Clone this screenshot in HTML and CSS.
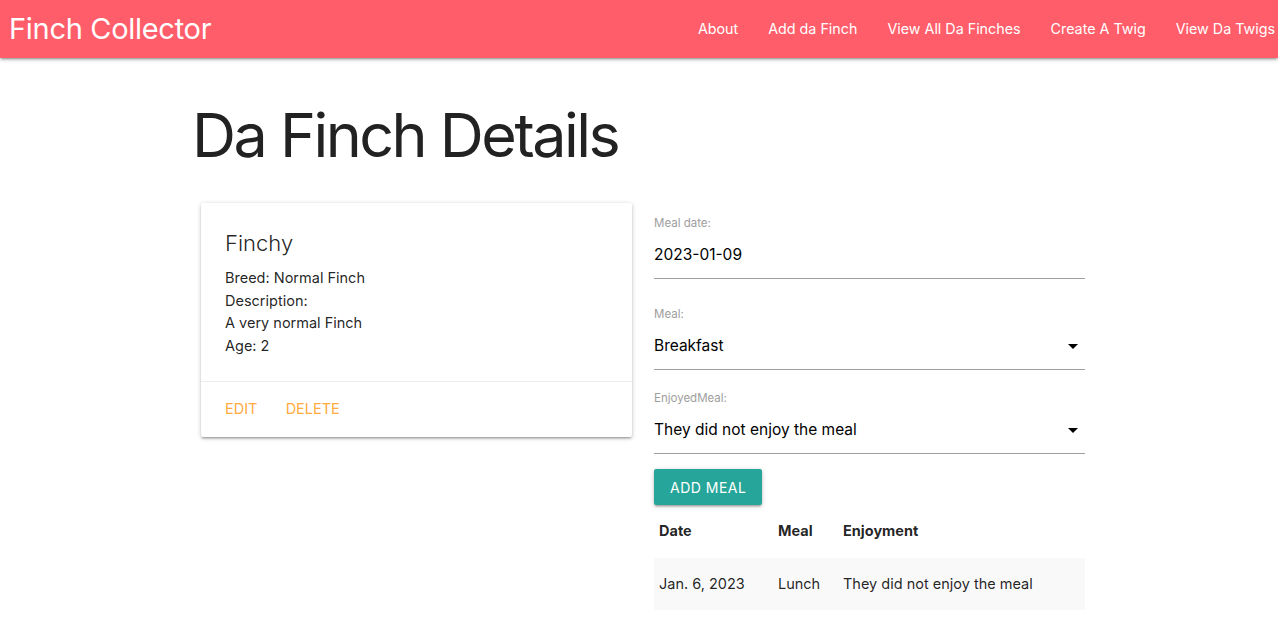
FILE: index.html
```html
<!DOCTYPE html>
<html lang="en">
<head>
<meta charset="utf-8">
<title>Finch Collector</title>
<link rel="stylesheet" href="styles.css">
</head>
<body>
<header class="navbar">
  <a class="brand" href="#">Finch Collector</a>
  <ul class="nav-links">
    <li><a href="#">About</a></li>
    <li><a href="#">Add da Finch</a></li>
    <li><a href="#">View All Da Finches</a></li>
    <li><a href="#">Create A Twig</a></li>
    <li><a href="#">View Da Twigs</a></li>
  </ul>
</header>
<main class="container">
  <h1 class="page-title">Da Finch Details</h1>
  <div class="row">
    <div class="col">
      <div class="card">
        <div class="card-content">
          <span class="card-title">Finchy</span>
          <p>Breed: Normal Finch</p>
          <p>Description:</p>
          <p>A very normal Finch</p>
          <p>Age: 2</p>
        </div>
        <div class="card-action">
          <a href="#">Edit</a>
          <a href="#">Delete</a>
        </div>
      </div>
    </div>
    <div class="col col-form">
      <form class="meal-form">
        <div class="field">
          <label class="field-label">Meal date:</label>
          <div class="field-input">2023-01-09</div>
        </div>
        <div class="field field-select">
          <label class="field-label">Meal:</label>
          <div class="field-input">
            <span>Breakfast</span>
            <svg class="caret" width="24" height="24" viewBox="0 0 24 24"><path d="M7 10l5 5 5-5z" fill="#000"/></svg>
          </div>
        </div>
        <div class="field field-select field-last">
          <label class="field-label">EnjoyedMeal:</label>
          <div class="field-input">
            <span>They did not enjoy the meal</span>
            <svg class="caret" width="24" height="24" viewBox="0 0 24 24"><path d="M7 10l5 5 5-5z" fill="#000"/></svg>
          </div>
        </div>
        <button type="button" class="btn">Add Meal</button>
      </form>
      <table class="meals">
        <thead>
          <tr><th class="c-date">Date</th><th class="c-meal">Meal</th><th>Enjoyment</th></tr>
        </thead>
        <tbody>
          <tr><td>Jan. 6, 2023</td><td>Lunch</td><td>They did not enjoy the meal</td></tr>
        </tbody>
      </table>
    </div>
  </div>
</main>
</body>
</html>
```

FILE: styles.css
```css
* { box-sizing: border-box; }

html, body {
  margin: 0;
  padding: 0;
}

body {
  font-family: Inter, "Noto Sans", Roboto, sans-serif;
  font-size: 15px;
  line-height: 1.5;
  color: rgba(0, 0, 0, 0.87);
  background: #fff;
  overflow-x: hidden;
}

a { text-decoration: none; }

.navbar {
  height: 58px;
  background: #ff5d6a;
  display: flex;
  align-items: center;
  justify-content: space-between;
  box-shadow: 0 2px 2px 0 rgba(0,0,0,0.14), 0 3px 1px -2px rgba(0,0,0,0.12), 0 1px 5px 0 rgba(0,0,0,0.2);
  overflow: hidden;
}

.brand {
  color: #fff;
  font-size: 29px;
  padding-left: 9px;
  letter-spacing: -0.3px;
  line-height: 56px;
}

.nav-links {
  list-style: none;
  margin: 0 -12px 0 0;
  padding: 0;
  display: flex;
}

.nav-links a {
  display: block;
  color: #fff;
  font-size: 14.3px;
  padding: 0 15px;
  line-height: 56px;
}

.container {
  width: 894px;
  margin: 0 auto;
}

.page-title {
  font-size: 61px;
  font-weight: 400;
  line-height: 1.1;
  margin: 44px 0 26px;
  letter-spacing: -2.5px;
  color: #222;
}

.row {
  display: flex;
  gap: 22px;
  padding-left: 9px;
}

.col {
  width: 431px;
}

.card {
  margin-top: 8px;
  background: #fff;
  border-radius: 2px;
  box-shadow: 0 2px 2px 0 rgba(0,0,0,0.14), 0 3px 1px -2px rgba(0,0,0,0.12), 0 1px 5px 0 rgba(0,0,0,0.2);
}

.card-content {
  padding: 24px;
}

.card-content p {
  margin: 0;
  font-size: 14.5px;
  line-height: 22.5px;
}

.card-title {
  display: block;
  font-size: 22px;
  font-weight: 300;
  line-height: 32px;
  margin-bottom: 8px;
}

.card-action {
  border-top: 1px solid rgba(160,160,160,0.2);
  padding: 16px 24px;
  line-height: 22.5px;
}

.card-action a {
  color: #ffab40;
  text-transform: uppercase;
  margin-right: 24px;
  font-size: 14.5px;
}

.col-form {
  padding-top: 21px;
}

.field {
  margin-bottom: 28px;
}

.field-select {
  margin-bottom: 21px;
}

.field-last {
  margin-bottom: 15px;
}

.field-label {
  display: block;
  font-size: 11.5px;
  line-height: 15px;
  color: #9e9e9e;
  margin-bottom: 3px;
}

.field-input {
  height: 45px;
  border-bottom: 1px solid #9e9e9e;
  font-size: 15.5px;
  color: #000;
  display: flex;
  align-items: center;
  justify-content: space-between;
  padding-bottom: 3px;
}

.caret {
  display: block;
}

.btn {
  height: 36px;
  padding: 0 16px;
  border: none;
  border-radius: 2px;
  background: #26a69a;
  color: #fff;
  font-family: inherit;
  font-size: 14px;
  letter-spacing: 0.5px;
  text-transform: uppercase;
  box-shadow: 0 2px 2px 0 rgba(0,0,0,0.14), 0 3px 1px -2px rgba(0,0,0,0.12), 0 1px 5px 0 rgba(0,0,0,0.2);
  display: block;
}

.meals {
  width: 431px;
  border-collapse: collapse;
  font-size: 14.5px;
}

.meals th, .meals td {
  text-align: left;
  padding: 15px 5px;
  line-height: 22.5px;
}

.meals th {
  font-weight: 700;
}

.meals .c-date { width: 119px; }
.meals .c-meal { width: 65px; }

.meals tbody tr {
  background: #f9f9f9;
}
```
